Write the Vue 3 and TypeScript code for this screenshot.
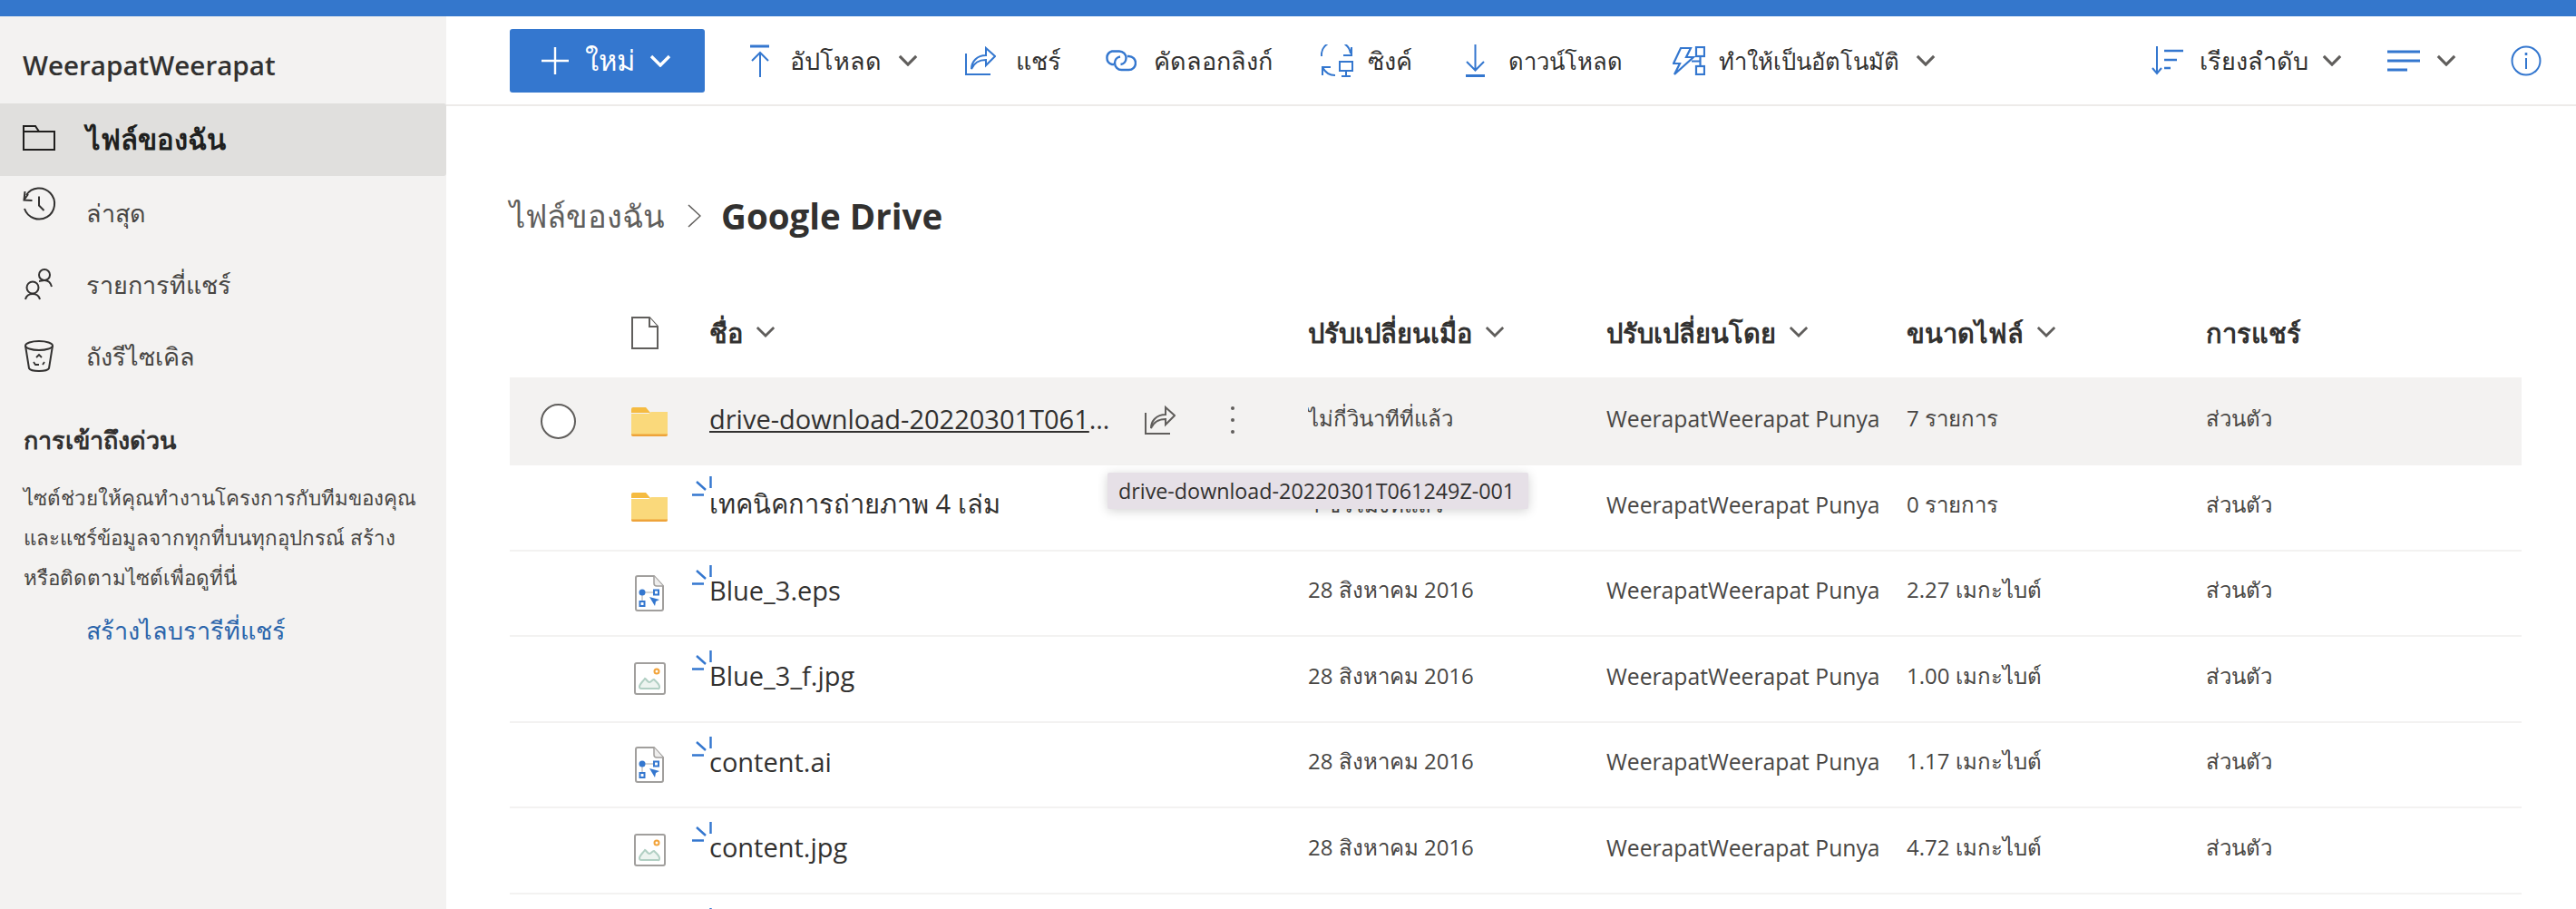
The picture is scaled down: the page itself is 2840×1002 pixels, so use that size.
<template>
  <div class="page">
    <div class="top-bar"></div>
    <div class="body">
      <!-- sidebar -->
      <aside class="sidebar">
        <div class="user-name">WeerapatWeerapat</div>
        <nav class="nav">
          <div class="nav-item active">
            <svg class="nav-icon" viewBox="0 0 36 36" fill="none" stroke="#201f1e" stroke-width="2">
              <path d="M1 29V3h13l4 6h17v20z" /><path d="M1 9h17" />
            </svg>
            <span>ไฟล์ของฉัน</span>
          </div>
          <div class="nav-item">
            <svg class="nav-icon" viewBox="0 0 36 36" fill="none" stroke="#323130" stroke-width="2">
              <path d="M4 4A17 17 0 1 1 2 19" /><path d="M2.500 0L1.500 9.500l9 .5" /><path d="M1.500 9.500L6 3" />
              <path d="M18 5.500v10l5.500 5.500" />
            </svg>
            <span>ล่าสุด</span>
          </div>
          <div class="nav-item">
            <svg class="nav-icon" viewBox="0 0 36 36" fill="none" stroke="#323130" stroke-width="2">
              <circle cx="24" cy="8" r="6" /><circle cx="11" cy="22" r="6.500" />
              <path d="M3 35c1-4 4-6 8-6s7 2 8 6" /><path d="M18 15c2 0 3-1 6-1 4 0 7 3 8 7" />
            </svg>
            <span>รายการที่แชร์</span>
          </div>
          <div class="nav-item">
            <svg class="nav-icon" viewBox="0 0 36 36" fill="none" stroke="#323130" stroke-width="2">
              <ellipse cx="18" cy="7" rx="15" ry="5" /><path d="M3 7l4 25c1 2 5 3 11 3s10-1 11-3l4-25" />
              <path d="M15 20l3-3 3 3M12 25l2 3h4M24 25l-2 3" stroke-width="1.800" />
            </svg>
            <span>ถังรีไซเคิล</span>
          </div>
        </nav>
        <h3 class="quick-title">การเข้าถึงด่วน</h3>
        <p class="quick-text">ไซต์ช่วยให้คุณทำงานโครงการกับทีมของคุณ<br />และแชร์ข้อมูลจากทุกที่บนทุกอุปกรณ์ สร้าง<br />หรือติดตามไซต์เพื่อดูที่นี่</p>
        <a class="quick-link">สร้างไลบรารีที่แชร์</a>
      </aside>

      <main class="main">
        <!-- command bar -->
        <header class="toolbar">
          <button class="new-btn">
            <svg width="32" height="32" viewBox="0 0 32 32" stroke="#fff" stroke-width="2.400"><path d="M16 1v30M1 16h30" /></svg>
            <span class="new-label">ใหม่</span>
            <svg class="chev" width="24" height="14" viewBox="0 0 24 14" fill="none" stroke="#fff" stroke-width="3.400"><path d="M2 2l10 10L22 2" /></svg>
          </button>
          <div class="tool t-upload">
            <svg width="22" height="36" viewBox="0 0 22 36" fill="none" stroke="#3477cf" stroke-width="2">
              <path d="M0 2h21" stroke-width="3" /><path d="M11 36V9M2 18l9-9 9 9" />
            </svg>
            <span>อัปโหลด</span>
            <svg class="chev" width="22" height="13" viewBox="0 0 24 14" fill="none" stroke="#605e5c" stroke-width="3.400"><path d="M2 2l10 10L22 2" /></svg>
          </div>
          <div class="tool t-share">
            <svg width="34" height="32" viewBox="0 0 34 32" fill="none" stroke="#3477cf" stroke-width="2">
              <path d="M1 8v23h27" /><path d="M7 25c0-8 6-15 16-15V2l10 9-10 10v-6c-7 0-13 3-16 10z" />
            </svg>
            <span>แชร์</span>
          </div>
          <div class="tool t-link">
            <svg width="36" height="24" viewBox="0 0 36 24" fill="none" stroke="#3477cf" stroke-width="2.400">
              <path d="M11 16H9A7.500 7.500 0 0 1 9 1.500h8A7.500 7.500 0 0 1 24.500 9a7 7 0 0 1-6 7" />
              <path d="M26 7h1.500a7.500 7.500 0 0 1 0 15h-8a7.500 7.500 0 0 1-7.500-7.500 7 7 0 0 1 6-7" />
            </svg>
            <span>คัดลอกลิงก์</span>
          </div>
          <div class="tool t-sync">
            <svg width="36" height="36" viewBox="0 0 36 36" fill="none" stroke="#3477cf" stroke-width="2">
              <path d="M1 13A16 15 0 0 1 33 10" /><path d="M34 3v9h-9" />
              <path d="M2 34v-9h9" /><path d="M2 25c3 6 8 9 14 9" />
              <rect x="21" y="19" width="14" height="10" /><path d="M28 29v5M23 35h10" />
            </svg>
            <span>ซิงค์</span>
          </div>
          <div class="tool t-download">
            <svg width="23" height="36" viewBox="0 0 23 36" fill="none" stroke="#3477cf" stroke-width="2">
              <path d="M11.500 0v28M2 19l9.500 9.500L21 19" /><path d="M1 34.500h21" stroke-width="3" />
            </svg>
            <span>ดาวน์โหลด</span>
          </div>
          <div class="tool t-auto">
            <svg width="36" height="32" viewBox="0 0 36 32" fill="none" stroke="#3477cf" stroke-width="2.200">
              <path d="M9 2h11l-5 10h8L2 31l6-12H1z" /><rect x="26" y="1" width="9" height="10" /><rect x="26" y="22" width="9" height="9" />
              <path d="M30.500 11v11M21 16.500h9.500" />
            </svg>
            <span>ทำให้เป็นอัตโนมัติ</span>
            <svg class="chev" width="22" height="13" viewBox="0 0 24 14" fill="none" stroke="#605e5c" stroke-width="3.400"><path d="M2 2l10 10L22 2" /></svg>
          </div>
          <div class="tool t-sort">
            <svg width="35" height="32" viewBox="0 0 35 32" fill="none" stroke="#3477cf" stroke-width="2">
              <path d="M6 0v30M1 24l5 6 5-6" /><path d="M14 5h21M14 15h14M14 24h7" stroke-width="2.600" />
            </svg>
            <span>เรียงลำดับ</span>
            <svg class="chev" width="22" height="13" viewBox="0 0 24 14" fill="none" stroke="#605e5c" stroke-width="3.400"><path d="M2 2l10 10L22 2" /></svg>
          </div>
          <div class="tool t-view">
            <svg width="36" height="24" viewBox="0 0 36 24" fill="none" stroke="#3477cf" stroke-width="3"><path d="M0 2h36M0 12h36M0 22h22" /></svg>
            <svg class="chev" width="22" height="13" viewBox="0 0 24 14" fill="none" stroke="#605e5c" stroke-width="3.400"><path d="M2 2l10 10L22 2" /></svg>
          </div>
          <div class="tool t-info">
            <svg width="34" height="34" viewBox="0 0 34 34" fill="none" stroke="#3477cf" stroke-width="2">
              <circle cx="17" cy="17" r="15.500" /><path d="M17 14v12" /><path d="M17 8v3" stroke-width="2.600" />
            </svg>
          </div>
        </header>

        <div class="content">
          <div class="crumbs">
            <span class="crumb-parent">ไฟล์ของฉัน</span>
            <svg width="15" height="26" viewBox="0 0 15 26" fill="none" stroke="#605e5c" stroke-width="1.500"><path d="M1 1l13 12L1 25" /></svg>
            <span class="crumb-current">Google Drive</span>
          </div>

          <!-- file list -->
          <div class="list">
            <div class="list-row list-head">
              <div></div>
              <div>
                <svg width="30" height="36" viewBox="0 0 30 36" fill="#fff" stroke="#605e5c" stroke-width="2">
                  <path d="M1 1h19l9 10v24H1z" /><path d="M20 1v10h9" />
                </svg>
              </div>
              <div v-for="col in columns" :key="col.label" class="head-cell">
                {{ col.label }}
                <svg v-if="col.sort" class="head-chev" width="22" height="13" viewBox="0 0 24 14" fill="none" stroke="#605e5c" stroke-width="3"><path d="M2 2l10 10L22 2" /></svg>
              </div>
            </div>

            <div v-for="(row, i) in rows" :key="i" :class="['list-row', 'file-row', { hovered: i === 0 }]">
              <div class="check-cell">
                <span v-if="i === 0" class="check"></span>
              </div>
              <div class="icon-cell">
                <svg v-if="row.type === 'folder'" width="40" height="32" viewBox="0 0 40 32">
                  <path d="M0 2a2 2 0 0 1 2-2h14l5 6H0z" fill="#f5bb41" />
                  <path d="M0 7h19l3-2h18v25a2 2 0 0 1-2 2H2a2 2 0 0 1-2-2z" fill="#fad97b" />
                  <path d="M0 29.500h40V30a2 2 0 0 1-2 2H2a2 2 0 0 1-2-2z" fill="#eea33a" />
                </svg>
                <svg v-else-if="row.type === 'vector'" width="32" height="40" viewBox="0 0 32 40">
                  <path d="M3 1h18l10 11v25a2 2 0 0 1-2 2H3a2 2 0 0 1-2-2V3a2 2 0 0 1 2-2z" fill="#fff" stroke="#a19f9d" stroke-width="2" />
                  <path d="M21 1v8a3 3 0 0 0 3 3h7" fill="#eeedec" stroke="#a19f9d" stroke-width="1.500" />
                  <path d="M8 19h15M8 21v11" stroke="#c8c6c4" stroke-width="1.500" />
                  <circle cx="8" cy="19" r="3.500" fill="#3477cf" />
                  <rect x="21" y="16.500" width="5" height="5" fill="#fff" stroke="#3477cf" stroke-width="2" />
                  <rect x="5.500" y="29" width="5" height="5" fill="#fff" stroke="#3477cf" stroke-width="2" />
                  <path d="M16 24l11 3-4 2-1 5z" fill="#3477cf" />
                </svg>
                <svg v-else-if="row.type === 'image'" width="35" height="36" viewBox="0 0 35 36">
                  <rect x="1" y="1" width="33" height="34" rx="2" fill="#fff" stroke="#a19f9d" stroke-width="2" />
                  <circle cx="25" cy="10" r="2.500" fill="#fff" stroke="#f2a33a" stroke-width="2" />
                  <path d="M6 27c0-3 4-6 6-9 2 1 3 4 5 4s3-3 5-3c3 3 6 5 6 8s-1 2-3 2H8c-1 0-2-1-2-2z" fill="#edf4f0" stroke="#b1cfc3" stroke-width="2" />
                </svg>
              </div>
              <div class="name-cell">
                <svg v-if="row.fresh" class="sync-mark" width="24" height="22" viewBox="0 0 24 22" fill="none" stroke="#3477cf" stroke-width="2.400">
                  <path d="M20.500 0v13M5 6l10 9M0 20.500h13" />
                </svg>
                <span :class="['file-name', { link: i === 0 }]">{{ row.name }}</span>
                <template v-if="i === 0">
                  <svg class="row-share" width="34" height="32" viewBox="0 0 34 32" fill="none" stroke="#605e5c" stroke-width="2">
                    <path d="M1 8v23h27" /><path d="M7 25c0-8 6-15 16-15V2l10 9-10 10v-6c-7 0-13 3-16 10z" />
                  </svg>
                  <span class="dots"><i></i><i></i><i></i></span>
                </template>
              </div>
              <div class="cell">{{ row.modified }}</div>
              <div class="cell by-cell">{{ row.name ? 'WeerapatWeerapat Punya' : '' }}</div>
              <div class="cell">{{ row.size }}</div>
              <div class="cell">{{ row.name ? 'ส่วนตัว' : '' }}</div>
            </div>

            <div class="tooltip">drive-download-20220301T061249Z-001</div>
          </div>
        </div>
      </main>
    </div>
  </div>
</template>

<script setup lang="ts">
interface FileRow {
  name: string
  type: 'folder' | 'vector' | 'image' | 'none'
  modified: string
  size: string
  fresh: boolean
}

const columns = [
  { label: 'ชื่อ', sort: true },
  { label: 'ปรับเปลี่ยนเมื่อ', sort: true },
  { label: 'ปรับเปลี่ยนโดย', sort: true },
  { label: 'ขนาดไฟล์', sort: true },
  { label: 'การแชร์', sort: false }
]

const rows: FileRow[] = [
  { name: 'drive-download-20220301T061249Z-001', type: 'folder', modified: 'ไม่กี่วินาทีที่แล้ว', size: '7 รายการ', fresh: false },
  { name: 'เทคนิคการถ่ายภาพ 4 เล่ม', type: 'folder', modified: '4 ชั่วโมงที่แล้ว', size: '0 รายการ', fresh: true },
  { name: 'Blue_3.eps', type: 'vector', modified: '28 สิงหาคม 2016', size: '2.27 เมกะไบต์', fresh: true },
  { name: 'Blue_3_f.jpg', type: 'image', modified: '28 สิงหาคม 2016', size: '1.00 เมกะไบต์', fresh: true },
  { name: 'content.ai', type: 'vector', modified: '28 สิงหาคม 2016', size: '1.17 เมกะไบต์', fresh: true },
  { name: 'content.jpg', type: 'image', modified: '28 สิงหาคม 2016', size: '4.72 เมกะไบต์', fresh: true },
  // next row is below the fold, only the top of its marker shows
  { name: '', type: 'none', modified: '', size: '', fresh: true }
]
</script>

<style>
html,
body {
  margin: 0;
  background: #fff;
  overflow: hidden;
}
</style>

<style scoped>
.page {
  width: 2840px;
  height: 1002px;
  overflow: hidden;
  display: flex;
  flex-direction: column;
  font-family: "Open Sans", "Noto Sans", "Noto Sans CJK SC", sans-serif;
  color: #323130;
}

.top-bar {
  height: 18px;
  flex: none;
  background: #3477cc;
}

.body {
  flex: 1;
  display: flex;
  min-height: 0;
}

/* sidebar */
.sidebar {
  width: 492px;
  flex: none;
  background: #f3f2f1;
  box-sizing: border-box;
}

.user-name {
  height: 96px;
  box-sizing: border-box;
  padding: 14px 0 0 25px;
  line-height: 80px;
  font-size: 29.600px;
  font-weight: 600;
}

.nav-item {
  height: 79px;
  display: flex;
  align-items: center;
  gap: 34px;
  padding-left: 25px;
  font-size: 27px;
  color: #484644;
}

.nav-item:not(.active) span {
  padding-top: 3px;
}

.nav-item.active {
  height: 80px;
  background: #e0dfdd;
  color: #201f1e;
  font-size: 31px;
  font-weight: 700;
  border-radius: 0 3px 3px 0;
}

.nav-icon {
  width: 36px;
  height: 36px;
  flex: none;
  overflow: visible;
}

.nav-item:nth-child(2) .nav-icon {
  margin-top: -9px;
}

.quick-title {
  margin: 34px 0 0 26px;
  font-size: 27px;
  line-height: 40px;
  font-weight: 700;
  color: #323130;
}

.quick-text {
  margin: 22px 0 0 26px;
  font-size: 22.400px;
  line-height: 44px;
  white-space: nowrap;
  color: #484644;
}

.quick-link {
  display: block;
  margin: 14px 0 0 95px;
  font-size: 27px;
  line-height: 44px;
  color: #2b65ab;
}

/* command bar */
.main {
  flex: 1;
  min-width: 0;
}

.toolbar {
  height: 99px;
  box-sizing: border-box;
  display: flex;
  align-items: center;
  padding-left: 70px;
  border-bottom: 2px solid #edebe9;
  font-size: 27px;
}

.new-btn {
  width: 215px;
  height: 70px;
  flex: none;
  display: flex;
  align-items: center;
  padding: 0 0 0 34px;
  border: none;
  border-radius: 3px;
  background: #3477cf;
  color: #fff;
  font: inherit;
  font-size: 31px;
  box-sizing: border-box;
}

.new-label {
  margin-left: 17px;
}

.new-btn .chev {
  margin-left: 16px;
}

.tool {
  display: flex;
  align-items: center;
  flex: none;
  height: 70px;
  white-space: nowrap;
}

.tool span {
  margin-left: 22px;
  padding-top: 2px;
}

.tool .chev {
  margin-left: 18px;
}

.t-upload { margin-left: 50px; }
.t-share { margin-left: 52px; }
.t-link { margin-left: 47px; }
.t-link span { margin-left: 19px; }
.t-sync { margin-left: 53px; }
.t-sync span { margin-left: 16px; }
.t-download { margin-left: 58px; }
.t-download span { margin-left: 25px; font-size: 25.600px; }
.t-auto { margin-left: 55px; }
.t-auto span { margin-left: 15px; font-size: 25.600px; }
.t-sort { margin-left: auto; }
.t-sort span { margin-left: 18px; }
.t-sort .chev { margin-left: 15px; }
.t-view { margin-left: 50px; }
.t-info { margin-left: 60px; margin-right: 38px; }

/* breadcrumb */
.content {
  padding: 0 60px 0 70px;
}

.crumbs {
  height: 200px;
  box-sizing: border-box;
  padding-top: 42px;
  display: flex;
  align-items: center;
  font-size: 34.500px;
}

.crumbs svg {
  margin: 0 22px 0 25px;
}

.crumb-parent {
  color: #605e5c;
}

.crumb-current {
  font-weight: 700;
  color: #323130;
  font-size: 38.500px;
}

/* file list */
.list {
  position: relative;
}

.list-row {
  display: grid;
  grid-template-columns: 134px 86px 660px 329px 331px 330px 348px;
  align-items: center;
}

.list-head {
  height: 99px;
  font-size: 29px;
  font-weight: 700;
}

.head-cell {
  display: flex;
  align-items: center;
  gap: 14px;
  padding-top: 2px;
  white-space: nowrap;
}

.head-chev {
  margin-top: -4px;
}

.list-head svg:not(.head-chev) {
  display: block;
}

.file-row {
  height: 94.500px;
  box-sizing: border-box;
  border-bottom: 2px solid #f3f2f1;
  font-size: 24px;
  color: #484644;
}

.file-row.hovered {
  height: 97px;
  background: #f3f2f1;
  border-bottom: none;
}

.check-cell {
  display: flex;
  padding-left: 34px;
}

.check {
  width: 39px;
  height: 39px;
  box-sizing: border-box;
  border: 2px solid #605e5c;
  border-radius: 50%;
  background: #fff;
}

.icon-cell {
  display: flex;
  justify-content: center;
  width: 40px;
}

.name-cell {
  position: relative;
  display: flex;
  align-items: center;
}

.sync-mark {
  position: absolute;
  left: -19px;
  top: -8px;
}

.file-name {
  min-height: 46px;
  box-sizing: border-box;
  padding-bottom: 6px;
  font-size: 29px;
  color: #323130;
  white-space: nowrap;
}

.file-name.link {
  width: 447px;
  overflow: hidden;
  text-overflow: ellipsis;
  text-decoration: underline;
}

.row-share {
  margin: -4px 0 0 33px;
}

.dots {
  margin: -4px 0 0 61px;
  display: flex;
  flex-direction: column;
  gap: 9px;
}

.dots i {
  width: 4px;
  height: 4px;
  border-radius: 50%;
  background: #605e5c;
}

.cell {
  padding-bottom: 6px;
  white-space: nowrap;
  overflow: hidden;
}

.by-cell {
  width: 304px;
  font-size: 24.700px;
}

.tooltip {
  position: absolute;
  left: 659px;
  top: 204px;
  width: 464px;
  height: 40px;
  box-sizing: border-box;
  padding-left: 12px;
  line-height: 40px;
  font-size: 23.300px;
  white-space: nowrap;
  color: #323130;
  background: #e6e0e7;
  border-radius: 2px;
  box-shadow: 0 2px 12px rgba(0, 0, 0, 0.18);
}
</style>
